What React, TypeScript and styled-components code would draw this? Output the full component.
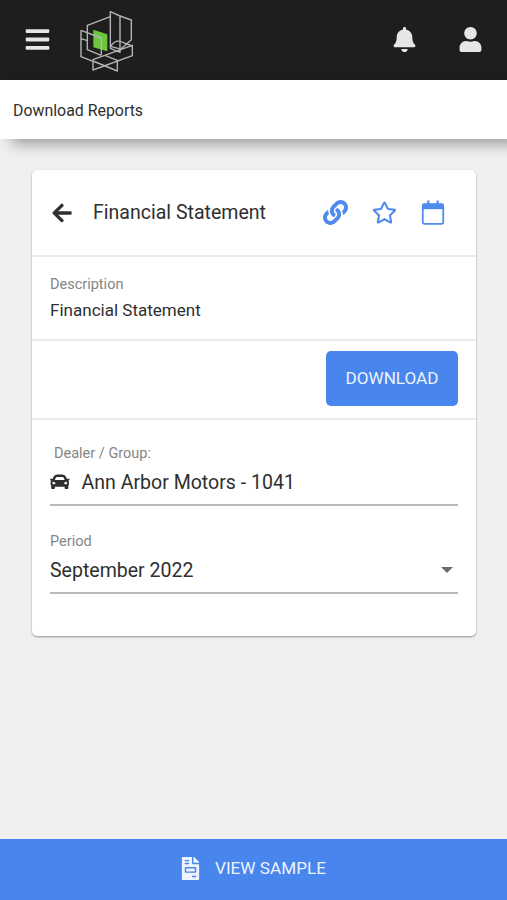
import React from "react";
import styled, { createGlobalStyle } from "styled-components";
import { FaArrowLeft, FaBars, FaBell, FaCar, FaFileInvoice, FaLink, FaRegStar, FaUser } from "react-icons/fa";

const Global = createGlobalStyle`
  * { box-sizing: border-box; }
  body { margin: 0; background: #f0f0f0; font-family: Roboto, sans-serif; color: #2f2f2f; }
`;

const Page = styled.div`
  height: 900px;
  display: flex;
  flex-direction: column;
  overflow: hidden;
`;

const TopBar = styled.header`
  flex: none;
  height: 80px;
  padding: 0 24px 1px 24px;
  display: flex;
  align-items: center;
  background: #1e1e1d;
  color: #e6e6e6;
`;

const IconButton = styled.button<{ $size: number; $color?: string }>`
  display: flex;
  padding: 0;
  border: 0;
  background: none;
  color: ${(p) => p.$color ?? "inherit"};
  font-size: ${(p) => p.$size}px;
`;

const Logo = styled.svg`
  width: 70px;
  height: 70px;
  margin-left: 19px;
`;

const TopActions = styled.div`
  margin-left: auto;
  display: flex;
  align-items: center;
  gap: 41px;
`;

const TitleBar = styled.div`
  flex: none;
  height: 59px;
  padding: 2px 13px 0;
  display: flex;
  align-items: center;
  background: #fff;
  box-shadow: 12px 5px 14px rgba(0, 0, 0, 0.36);
  font-size: 15.9px;
  line-height: 20px;
`;

const Card = styled.main`
  flex: none;
  height: 466px;
  margin: 31px 31px 0 32px;
  background: #fff;
  border-radius: 5px;
  box-shadow: 0 1px 2px rgba(0, 0, 0, 0.4);
`;

const CardHeader = styled.div`
  height: 87px;
  padding: 0 31px 0 19px;
  display: flex;
  align-items: center;
  border-bottom: 2px solid #ebebeb;
`;

const CardTitle = styled.h1`
  margin: 1px 0 0 20px;
  font-size: 19.55px;
  font-weight: 400;
  line-height: 24px;
`;

const CardActions = styled.div`
  margin-left: auto;
  display: flex;
  align-items: center;
  gap: 24px;
`;

const CalendarIcon = styled.svg`
  width: 24px;
  height: 25px;
`;

const Description = styled.section`
  height: 84px;
  padding: 18px 18px 0;
  border-bottom: 2px solid #ebebeb;
`;

const Label = styled.div<{ $indent?: number }>`
  padding-left: ${(p) => p.$indent ?? 0}px;
  color: #858585;
  font-size: 14.5px;
  line-height: 20px;
`;

const DescriptionText = styled.div`
  margin-top: 3px;
  font-size: 17.05px;
  line-height: 24px;
`;

const ActionRow = styled.div`
  height: 79px;
  padding: 10px 18px 0;
  display: flex;
  justify-content: flex-end;
  align-items: flex-start;
  border-bottom: 2px solid #ebebeb;
`;

const DownloadButton = styled.button`
  width: 132px;
  height: 55px;
  padding: 0 0 1px;
  border: 0;
  border-radius: 5px;
  background: #4885ed;
  color: #edf3ff;
  font: 400 17.1px/24px Roboto, sans-serif;
`;

const Fields = styled.div`
  padding: 24px 18px 0 18px;
  display: flex;
  flex-direction: column;
  gap: 26px;
`;

const Field = styled.div`
  height: 62px;
  border-bottom: 2px solid #b9b9b9;
`;

const FieldValue = styled.div`
  height: 28px;
  margin-top: 4px;
  display: flex;
  align-items: center;
  font-size: 19.55px;
  line-height: 28px;
`;

const FieldText = styled.span<{ $gap?: number }>`
  margin-left: ${(p) => p.$gap ?? 0}px;
  padding-top: 1px;
`;

const Caret = styled.span`
  margin: 0 5px 0 auto;
  border: 6px solid transparent;
  border-top-color: #6c6c6c;
  border-bottom: 0;
`;

const SampleBar = styled.button`
  flex: none;
  height: 61px;
  margin-top: auto;
  padding: 0 2px 3px 0;
  display: flex;
  align-items: center;
  justify-content: center;
  gap: 13px;
  border: 0;
  background: #4885ed;
  color: #edf3ff;
  font: 400 17.15px/24px Roboto, sans-serif;
`;

function BrandLogo() {
  return (
    <Logo viewBox="0 0 210 210" fill="none" stroke="#b4b4b4" strokeWidth="4.2" strokeLinejoin="round">
      <path d="M70 74L112 88V139L70 127Z" fill="#6cc63b" stroke="none" />
      <path d="M121 20V130L150 142V33Z" />
      <path d="M150 33L184 45V104L145 139" />
      <path d="M121 35L52 61V134L93 151" />
      <path d="M33 76L94 99V151" />
      <path d="M33 76V155L69 169M33 101L52 107" />
      <path d="M69 164L187 121V152L69 195Z" />
      <path d="M106 152L142 166V198L69 168" />
      <path d="M122 124Q137 100 160 113L187 123M122 124L154 133" />
    </Logo>
  );
}

function Calendar() {
  return (
    <CalendarIcon viewBox="0 0 24 25" fill="none" stroke="currentColor">
      <rect x="1.75" y="4.2" width="20.5" height="19.6" rx="1.8" strokeWidth="1.8" />
      <path d="M1.5 6.5H22.5" strokeWidth="5.4" />
      <path d="M7.3 0.5V5M16.7 0.5V5" strokeWidth="2.2" />
    </CalendarIcon>
  );
}

export default function App() {
  return (
    <Page>
      <Global />
      <TopBar>
        <IconButton $size={27} aria-label="Menu"><FaBars /></IconButton>
        <BrandLogo />
        <TopActions>
          <IconButton $size={25} aria-label="Notifications"><FaBell /></IconButton>
          <IconButton $size={25} aria-label="Account"><FaUser /></IconButton>
        </TopActions>
      </TopBar>
      <TitleBar>Download Reports</TitleBar>
      <Card>
        <CardHeader>
          <IconButton $size={22} aria-label="Back"><FaArrowLeft /></IconButton>
          <CardTitle>Financial Statement</CardTitle>
          <CardActions>
            <IconButton $size={25} $color="#4f8bed" aria-label="Copy link"><FaLink /></IconButton>
            <IconButton $size={25} $color="#4f8bed" aria-label="Favorite"><FaRegStar /></IconButton>
            <IconButton $size={25} $color="#4f8bed" aria-label="Schedule"><Calendar /></IconButton>
          </CardActions>
        </CardHeader>
        <Description>
          <Label>Description</Label>
          <DescriptionText>Financial Statement</DescriptionText>
        </Description>
        <ActionRow>
          <DownloadButton>DOWNLOAD</DownloadButton>
        </ActionRow>
        <Fields>
          <Field>
            <Label $indent={4}>Dealer / Group:</Label>
            <FieldValue>
              <FaCar />
              <FieldText $gap={12}>Ann Arbor Motors - 1041</FieldText>
            </FieldValue>
          </Field>
          <Field>
            <Label>Period</Label>
            <FieldValue>
              <FieldText>September 2022</FieldText>
              <Caret />
            </FieldValue>
          </Field>
        </Fields>
      </Card>
      <SampleBar>
        <FaFileInvoice size={23} />
        <span>VIEW SAMPLE</span>
      </SampleBar>
    </Page>
  );
}
